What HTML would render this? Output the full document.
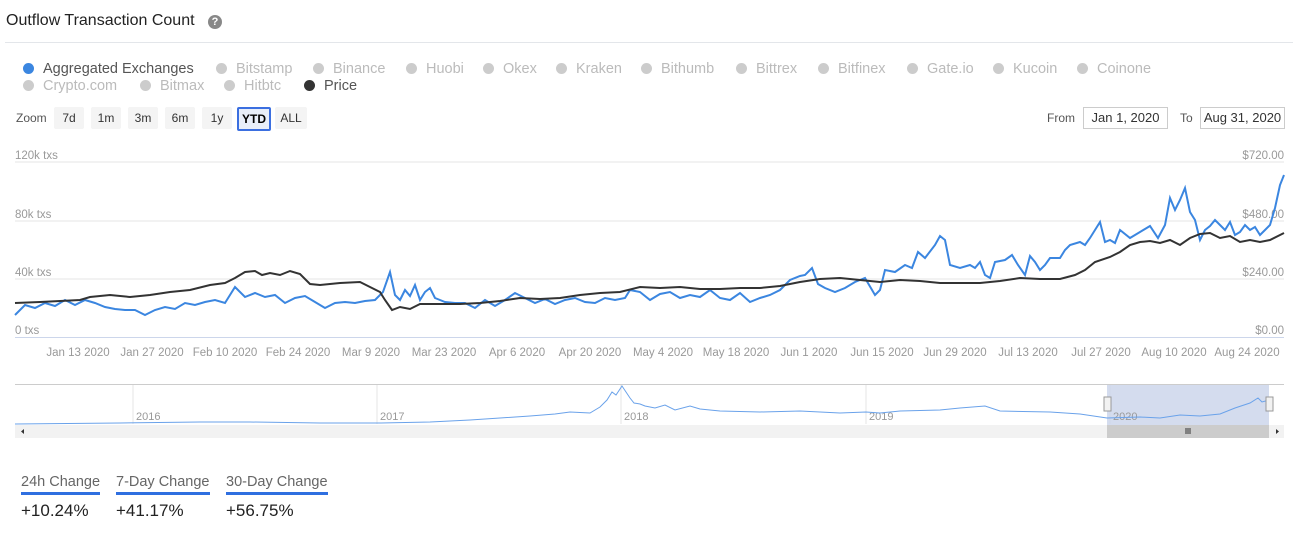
<!DOCTYPE html>
<html><head><meta charset="utf-8"><style>
body{margin:0;width:1296px;height:537px;background:#fff;font-family:"Liberation Sans",sans-serif;position:relative;overflow:hidden}
.a{position:absolute;white-space:nowrap}
.t{font-size:16px;color:#222}
.lg{position:absolute;font-size:14.5px;color:#bbb;white-space:nowrap}
.dot{position:absolute;left:-20px;top:2px;width:11px;height:11px;border-radius:50%;background:#ccc}
.zb{position:absolute;top:107px;height:22px;line-height:22px;font-size:12px;color:#333;background:#f4f4f4;text-align:center;border-radius:2px}
.box{position:absolute;top:107px;height:20px;border:1px solid #ccc;font-size:13px;color:#333;line-height:20px;text-align:center}
.ch{font-size:14.5px;color:#666;border-bottom:3px solid #2f6fe0;padding-bottom:2px}
.v{font-size:17px;color:#222}
</style></head><body>
<div class="a t" style="left:6px;top:12px">Outflow Transaction Count</div>
<div class="a" style="left:208px;top:15px;width:14px;height:14px;border-radius:50%;background:#888;color:#fff;font-size:11px;font-weight:bold;text-align:center;line-height:14px">?</div>
<div class="a" style="left:5px;top:42px;width:1288px;height:1px;background:#e3e6ea"></div>
<div class="lg" style="left:43px;top:61px;color:#555"><span class="dot" style="background:#3b86e0"></span>Aggregated Exchanges</div>
<div class="lg" style="left:236px;top:61px"><span class="dot"></span>Bitstamp</div>
<div class="lg" style="left:333px;top:61px"><span class="dot"></span>Binance</div>
<div class="lg" style="left:426px;top:61px"><span class="dot"></span>Huobi</div>
<div class="lg" style="left:503px;top:61px"><span class="dot"></span>Okex</div>
<div class="lg" style="left:576px;top:61px"><span class="dot"></span>Kraken</div>
<div class="lg" style="left:661px;top:61px"><span class="dot"></span>Bithumb</div>
<div class="lg" style="left:756px;top:61px"><span class="dot"></span>Bittrex</div>
<div class="lg" style="left:838px;top:61px"><span class="dot"></span>Bitfinex</div>
<div class="lg" style="left:927px;top:61px"><span class="dot"></span>Gate.io</div>
<div class="lg" style="left:1013px;top:61px"><span class="dot"></span>Kucoin</div>
<div class="lg" style="left:1097px;top:61px"><span class="dot"></span>Coinone</div>
<div class="lg" style="left:43px;top:78px"><span class="dot"></span>Crypto.com</div>
<div class="lg" style="left:160px;top:78px"><span class="dot"></span>Bitmax</div>
<div class="lg" style="left:244px;top:78px"><span class="dot"></span>Hitbtc</div>
<div class="lg" style="left:324px;top:78px;color:#555"><span class="dot" style="background:#333"></span>Price</div>
<div class="a" style="left:16px;top:111px;font-size:12px;color:#555">Zoom</div>
<div class="zb" style="left:54px;width:30px">7d</div>
<div class="zb" style="left:91px;width:30px">1m</div>
<div class="zb" style="left:128px;width:30px">3m</div>
<div class="zb" style="left:165px;width:30px">6m</div>
<div class="zb" style="left:202px;width:30px">1y</div>
<div class="zb" style="left:237px;width:30px;height:20px;line-height:20px;border:2px solid #3b6fe0;background:#e8eef9;font-weight:bold;color:#000">YTD</div>
<div class="zb" style="left:275px;width:32px">ALL</div>
<div class="a" style="left:1047px;top:111px;font-size:12px;color:#555">From</div>
<div class="box" style="left:1083px;width:83px">Jan 1, 2020</div>
<div class="a" style="left:1180px;top:111px;font-size:12px;color:#555">To</div>
<div class="box" style="left:1200px;width:83px">Aug 31, 2020</div>
<svg class="a" style="left:0;top:0" width="1296" height="537">
<g stroke="#e6e6e6"><line x1="15" y1="162" x2="1284" y2="162"/><line x1="15" y1="221" x2="1284" y2="221"/><line x1="15" y1="279" x2="1284" y2="279"/></g>
<line x1="15" y1="337.5" x2="1284" y2="337.5" stroke="#ccd6eb"/>
<g font-size="11.5" fill="#999" font-family="Liberation Sans"><text x="15" y="159">120k txs</text><text x="15" y="218">80k txs</text><text x="15" y="276">40k txs</text><text x="15" y="334">0 txs</text>
<g text-anchor="end"><text x="1284" y="159">$720.00</text><text x="1284" y="218">$480.00</text><text x="1284" y="276">$240.00</text><text x="1284" y="334">$0.00</text></g>
<g text-anchor="middle"><text x="78" y="356">Jan 13 2020</text><text x="152" y="356">Jan 27 2020</text><text x="225" y="356">Feb 10 2020</text><text x="298" y="356">Feb 24 2020</text><text x="371" y="356">Mar 9 2020</text><text x="444" y="356">Mar 23 2020</text><text x="517" y="356">Apr 6 2020</text><text x="590" y="356">Apr 20 2020</text><text x="663" y="356">May 4 2020</text><text x="736" y="356">May 18 2020</text><text x="809" y="356">Jun 1 2020</text><text x="882" y="356">Jun 15 2020</text><text x="955" y="356">Jun 29 2020</text><text x="1028" y="356">Jul 13 2020</text><text x="1101" y="356">Jul 27 2020</text><text x="1174" y="356">Aug 10 2020</text><text x="1247" y="356">Aug 24 2020</text></g></g>
<polyline fill="none" stroke="#3b86e0" stroke-width="2" points="15,315 25,305 35,308 45,303 55,306 65,300 75,305 85,300 95,303 105,307 115,309 125,310 135,310 145,315 155,310 165,307 175,309 185,303 195,305 205,302 215,300 225,303 235,287 245,297 255,293 265,297 275,295 285,303 295,298 305,296 315,302 325,308 335,303 345,302 355,303 365,301 375,300 383,292 390,272 395,295 400,300 405,290 410,296 415,285 420,300 425,292 430,288 435,298 440,300 445,302 455,303 465,303 475,308 485,300 495,306 505,300 515,293 525,298 535,303 545,299 555,304 565,300 575,298 585,302 595,303 605,298 615,300 625,298 630,290 640,292 650,300 660,294 670,292 680,298 690,295 700,297 710,290 720,298 730,300 740,293 750,302 760,298 770,295 780,290 790,280 800,276 805,275 812,268 818,284 825,288 835,292 845,288 855,282 865,278 875,295 880,290 885,270 895,272 905,265 912,268 918,252 925,258 935,245 940,236 945,240 950,265 960,268 970,265 975,268 980,262 985,275 990,278 995,262 1005,260 1012,255 1018,265 1025,275 1030,256 1035,262 1040,270 1045,265 1050,258 1060,258 1065,250 1070,245 1080,242 1085,245 1090,238 1100,222 1105,242 1110,240 1115,243 1120,230 1130,238 1140,232 1150,226 1158,238 1165,225 1170,198 1175,210 1180,200 1185,188 1190,212 1195,220 1200,240 1205,230 1210,226 1215,220 1220,225 1225,230 1230,222 1235,235 1240,232 1245,225 1250,230 1255,227 1260,235 1265,230 1270,225 1275,208 1280,185 1284,175"/>
<polyline fill="none" stroke="#333" stroke-width="2" points="15,303 40,302 60,301 80,300 90,297 110,295 130,297 150,295 170,292 190,290 210,285 225,283 235,278 245,272 255,271 262,275 270,273 280,275 290,271 300,274 310,284 320,285 340,283 360,282 370,287 380,292 385,300 392,310 400,307 410,309 420,304 440,304 460,304 480,303 500,301 520,298 540,299 560,298 580,295 600,293 620,292 640,287 660,288 680,287 700,289 720,289 740,288 760,288 780,286 800,282 820,279 840,278 860,280 880,282 900,280 920,281 940,283 960,283 980,283 1000,281 1020,278 1040,279 1060,279 1075,275 1085,270 1095,262 1110,257 1120,252 1130,245 1140,242 1150,241 1160,243 1170,240 1180,245 1190,238 1200,234 1210,233 1220,238 1230,236 1240,242 1250,240 1260,242 1270,240 1284,233"/>
<line x1="15" y1="384.5" x2="1284" y2="384.5" stroke="#ccc"/>
<g stroke="#e6e6e6"><line x1="133" y1="385" x2="133" y2="424"/><line x1="377" y1="385" x2="377" y2="424"/><line x1="621" y1="385" x2="621" y2="424"/><line x1="866" y1="385" x2="866" y2="424"/><line x1="1110" y1="385" x2="1110" y2="424"/></g>
<rect x="1107" y="385" width="162" height="40" fill="#ccd6eb" opacity="0.85"/>
<g font-size="11" fill="#999" font-family="Liberation Sans"><text x="136" y="420">2016</text><text x="380" y="420">2017</text><text x="624" y="420">2018</text><text x="869" y="420">2019</text><text x="1113" y="420">2020</text></g>
<polyline fill="none" stroke="#6aa2ea" stroke-width="1" points="15,424 120,423 200,422 250,422 320,423 380,423 430,422 470,420 500,418 530,416 555,414 570,412 590,413 600,407 607,400 612,392 616,395 622,386 626,392 630,398 634,403 640,404 645,406 655,408 665,405 675,410 690,406 700,409 720,411 760,412 800,411 840,413 866,412 880,413 900,411 940,410 960,408 985,406 1000,411 1050,412 1080,414 1107,418 1140,417 1160,418 1180,415 1200,416 1220,414 1235,408 1250,403 1258,398 1262,402 1269,400"/>
<rect x="15" y="425" width="1269" height="13" fill="#f2f2f2"/>
<rect x="1107" y="425" width="162" height="13" fill="#ccc"/>
<g stroke="#333"><line x1="1186" y1="428" x2="1186" y2="434"/><line x1="1188" y1="428" x2="1188" y2="434"/><line x1="1190" y1="428" x2="1190" y2="434"/></g>
<path d="M24 429 L21 431.5 L24 434Z M1276 429 L1279 431.5 L1276 434Z" fill="#333"/>
<rect x="1104" y="397" width="7" height="14" fill="#f2f2f2" stroke="#999"/>
<rect x="1266" y="397" width="7" height="14" fill="#f2f2f2" stroke="#999"/>
</svg>
<div class="a ch" style="left:21px;top:474px">24h Change</div>
<div class="a ch" style="left:116px;top:474px">7-Day Change</div>
<div class="a ch" style="left:226px;top:474px">30-Day Change</div>
<div class="a v" style="left:21px;top:501px">+10.24%</div>
<div class="a v" style="left:116px;top:501px">+41.17%</div>
<div class="a v" style="left:226px;top:501px">+56.75%</div>
</body></html>
